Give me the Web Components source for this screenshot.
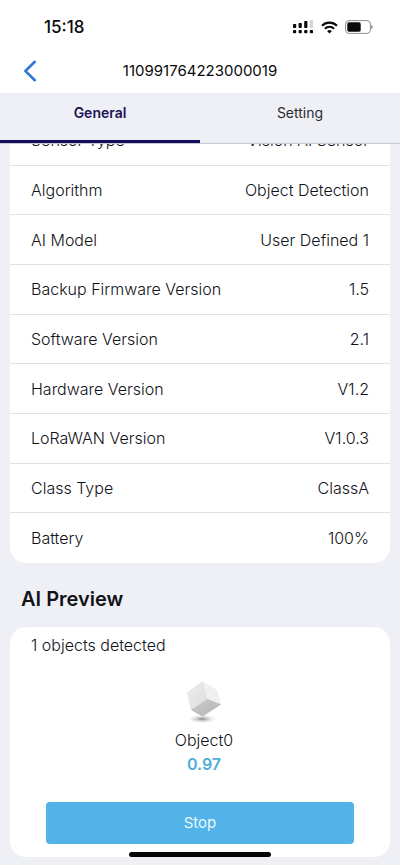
<!DOCTYPE html>
<html lang="en">
<head>
<meta charset="utf-8">
<meta name="viewport" content="width=device-width, initial-scale=1">
<title>Device details</title>
<style>
  html, body { height: 100%; margin: 0; }
  body {
    font-family: Inter, "Liberation Sans", sans-serif;
    color: #111217;
    background: #eff0f5;
  }
</style>
</head>
<body>
<device-screen></device-screen>
<script>
const define = (name, html) => {
  const template = document.createElement('template');
  template.innerHTML = html;
  customElements.define(name, class extends HTMLElement {
    constructor() {
      super();
      this.attachShadow({ mode: 'open' }).append(template.content.cloneNode(true));
    }
  });
};

define('status-bar', `
<style>
  :host { display: flex; justify-content: space-between; align-items: center; height: 54px; padding: 0 27px 0 44px; background: #fff; }
  time { font-size: 17px; line-height: 20px; font-weight: 500; color: #0a0a0a; }
  .icons { display: flex; align-items: center; gap: 7px; }
  svg { display: block; }
</style>
<time>15:18</time>
<div class="icons">
  <svg width="21" height="14" viewBox="0 0 21 14" fill="#0a0a0a" aria-label="Signal">
    <rect x="0" y="4" width="3.2" height="4" rx=".8"/><rect x="5.6" y="3" width="3.2" height="5" rx=".8"/>
    <rect x="11.2" y="1" width="3.2" height="7" rx=".8"/><rect x="16.8" y="0" width="3.2" height="8" rx=".8" fill="#d4d4d4"/>
    <rect x="0" y="10" width="3.2" height="3.2" rx=".8"/><rect x="5.6" y="10" width="3.2" height="3.2" rx=".8"/>
    <rect x="11.2" y="10" width="3.2" height="3.2" rx=".8"/><rect x="16.8" y="10" width="3.2" height="3.2" rx=".8"/>
  </svg>
  <svg width="17" height="13" viewBox="0 0 17 13" fill="none" stroke="#0a0a0a" stroke-width="2.1" aria-label="Wi-Fi">
    <path d="M1 4.7a10.6 10.6 0 0 1 15 0"/><path d="M3.9 7.7a6.5 6.5 0 0 1 9.2 0"/>
    <path d="M8.5 12.6 6.2 10.2a3.3 3.3 0 0 1 4.6 0z" fill="#0a0a0a" stroke="none"/>
  </svg>
  <svg width="28" height="14" viewBox="0 0 28 14" aria-label="Battery">
    <rect x=".6" y=".6" width="24.8" height="12.8" rx="3.4" fill="none" stroke="#8d8d8d"/>
    <rect x="2.3" y="2.3" width="13.4" height="9.4" rx="1.6" fill="#0a0a0a"/>
    <path d="M26.3 5v4q1.4-.6 1.4-2t-1.4-2z" fill="#777"/>
  </svg>
</div>`);

define('nav-header', `
<style>
  :host { display: grid; grid-template-columns: 60px 1fr 60px; align-items: center; height: 39px; background: #fff; }
  button { justify-self: start; margin: 0 0 5px 22px; padding: 0; border: 0; background: none; display: block; }
  svg { display: block; }
  h1 { margin: 0 0 6px; text-align: center; font-size: 15px; line-height: 20px; font-weight: 400; color: #0a0a0a; }
</style>
<button type="button" aria-label="Back">
  <svg width="16" height="22" viewBox="0 0 16 22" fill="none" stroke="#3577d6" stroke-width="2.6" stroke-linecap="round" stroke-linejoin="round"><path d="M12.8 1.8 3.4 11l9.4 9.2"/></svg>
</button>
<h1><slot></slot></h1>`);

define('tab-bar', `
<style>
  :host { display: grid; grid-auto-flow: column; grid-auto-columns: 1fr; height: 51px; box-sizing: border-box; background: #eff0f5; border-bottom: 1px solid #c9cacf; }
</style>
<slot></slot>`);

define('tab-item', `
<style>
  :host { display: flex; }
  button { flex: 1; border: 0; border-bottom: 3px solid transparent; background: none; padding: 0 0 7px; font: 400 14px/20px Inter, "Liberation Sans", sans-serif; color: #2b2c31; }
  :host([selected]) button { font-weight: 600; color: #1b1456; border-bottom-color: #120c5c; }
</style>
<button type="button"><slot></slot></button>`);

define('info-list', `
<style>
  :host { display: grid; grid-auto-rows: 1fr; min-height: 447px; background: #fff; border-radius: 16px; overflow: hidden; }
</style>
<slot></slot>`);

define('info-row', `
<style>
  :host { display: flex; align-items: center; justify-content: space-between; gap: 16px; padding: 0 21px; border-bottom: 1px solid #dfe0e3; font-size: 16px; line-height: 20px; font-weight: 300; }
  :host(:last-child) { border-bottom: 0; }
</style>
<span><slot></slot></span><span><slot name="value"></slot></span>`);

define('section-title', `
<style>
  :host { display: block; padding: 24px 11px 15px; }
  h2 { margin: 0; font-size: 20px; line-height: 25px; font-weight: 600; color: #111318; }
</style>
<h2><slot></slot></h2>`);

define('action-button', `
<style>
  :host { display: block; }
  button { width: 100%; height: 42px; border: 0; border-radius: 4px; background: #53b2e8; color: #e4fbff; font: 400 15px/20px Inter, "Liberation Sans", sans-serif; padding: 0; }
</style>
<button type="button"><slot></slot></button>`);

define('detected-object', `
<style>
  :host { display: flex; flex-direction: column; align-items: center; padding-left: 8px; }
  svg { display: block; }
  .name { font-size: 16px; line-height: 20px; margin-top: 6px; font-weight: 300; }
  .score { font-size: 16px; line-height: 20px; margin-top: 4px; font-weight: 600; color: #4fadd9; }
</style>
<svg width="40" height="44" viewBox="0 0 40 44" aria-hidden="true">
  <defs>
    <radialGradient id="shade"><stop offset="0" stop-color="#666" stop-opacity=".8"/><stop offset=".5" stop-color="#aaa" stop-opacity=".4"/><stop offset="1" stop-color="#ddd" stop-opacity="0"/></radialGradient>
    <linearGradient id="left" x1="0" y1="0" x2="1" y2="1"><stop offset="0" stop-color="#ececec"/><stop offset="1" stop-color="#dedede"/></linearGradient>
    <linearGradient id="base" x1="0" y1="0" x2="1" y2="1"><stop offset="0" stop-color="#cbcbcb"/><stop offset="1" stop-color="#b4b4b4"/></linearGradient>
  </defs>
  <ellipse cx="18" cy="39" rx="15" ry="4.5" fill="url(#shade)"/>
  <path d="M18.5 1.5 3 12.5 7 30l11.500 6.500L37 24.500 33 10.500z" fill="#e2e2e2"/>
  <path d="M18.500 1.500 3 12.500 7 30l16.500-11z" fill="url(#left)"/>
  <path d="M18.500 1.500 33 10.500 37 24.500 23.500 19z" fill="#f0f0f0"/>
  <path d="M7 30 23.500 19 37 24.500 18.500 36.500z" fill="url(#base)"/>
</svg>
<div class="name"><slot></slot></div>
<div class="score"><slot name="score"></slot></div>`);

define('preview-card', `
<style>
  :host { display: block; background: #fff; border-radius: 16px; padding: 8px 21px 13px; }
  p { margin: 0 0 25px; font-size: 16px; line-height: 20px; font-weight: 300; }
  ::slotted(action-button) { margin: 28px 15px 0; }
</style>
<p><slot name="summary"></slot></p>
<slot></slot>`);

define('home-indicator', `
<style>
  :host { position: fixed; bottom: 8px; left: 0; right: 0; display: flex; justify-content: center; pointer-events: none; }
  i { width: 142px; height: 5px; border-radius: 3px; background: #050505; }
</style>
<i></i>`);

define('device-screen', `
<style>
  :host { display: flex; flex-direction: column; height: 100vh; }
  main { flex: 1; min-height: 0; display: flex; flex-direction: column-reverse; overflow-y: auto; scrollbar-width: none; }
  .content { flex: none; padding: 0 10px 8px; }
</style>
<status-bar></status-bar>
<nav-header>110991764223000019</nav-header>
<tab-bar><tab-item selected>General</tab-item><tab-item>Setting</tab-item></tab-bar>
<main><div class="content">
  <info-list>
    <info-row>Sensor Type<span slot="value">Vision AI Sensor</span></info-row>
    <info-row>Algorithm<span slot="value">Object Detection</span></info-row>
    <info-row>AI Model<span slot="value">User Defined 1</span></info-row>
    <info-row>Backup Firmware Version<span slot="value">1.5</span></info-row>
    <info-row>Software Version<span slot="value">2.1</span></info-row>
    <info-row>Hardware Version<span slot="value">V1.2</span></info-row>
    <info-row>LoRaWAN Version<span slot="value">V1.0.3</span></info-row>
    <info-row>Class Type<span slot="value">ClassA</span></info-row>
    <info-row>Battery<span slot="value">100%</span></info-row>
  </info-list>
  <section-title>AI Preview</section-title>
  <preview-card>
    <span slot="summary">1 objects detected</span>
    <detected-object>Object0<span slot="score">0.97</span></detected-object>
    <action-button>Stop</action-button>
  </preview-card>
</div></main>
<home-indicator></home-indicator>`);
</script>
</body>
</html>
